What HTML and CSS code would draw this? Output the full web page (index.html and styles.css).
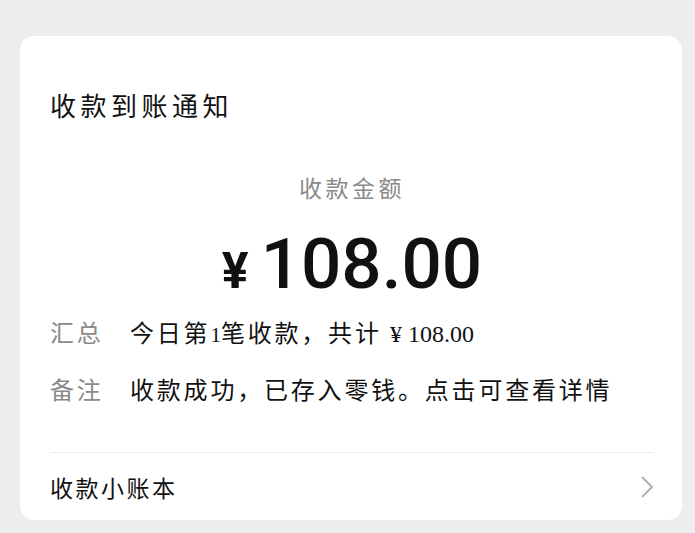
FILE: index.html
```html
<!DOCTYPE html>
<html lang="zh">
<head>
<meta charset="utf-8">
<link rel="stylesheet" href="styles.css">
</head>
<body>
<div class="card">
  <div class="title">收款到账通知</div>
  <div class="label-amount">收款金额</div>
  <div class="amount"><span class="yen">¥</span><span class="num">108.00</span></div>
  <div class="row">
    <div class="key">汇总</div>
    <div class="val">今日第<span class="serif one">1</span>笔收款，共计 <span class="serif">¥ 108.00</span></div>
  </div>
  <div class="row row2">
    <div class="key">备注</div>
    <div class="val">收款成功，已存入零钱。点击可查看详情</div>
  </div>
  <div class="divider"></div>
  <div class="footer">
    <div class="foot-text">收款小账本</div>
    <svg class="chev" width="14" height="24" viewBox="0 0 14 24"><path d="M2 2 L12 12 L2 22" fill="none" stroke="#b3b3b3" stroke-width="2"/></svg>
  </div>
</div>
</body>
</html>
```
FILE: styles.css
```css
html, body { margin: 0; padding: 0; }
body {
  background: #ededed;
  width: 695px;
  height: 533px;
  overflow: hidden;
  font-family: "Noto Sans CJK SC", "Noto Sans", sans-serif;
  color: #111;
}
.card {
  margin: 36px 13px 0 20px;
  height: 484px;
  background: #fff;
  border-radius: 14px;
  padding: 0 28px 0 30px;
  box-sizing: border-box;
  display: flex;
  flex-direction: column;
}
.title {
  margin-top: 52px;
  font-size: 26px;
  line-height: 34px;
  letter-spacing: 4.5px;
}
.label-amount {
  margin-top: 50px;
  text-align: center;
  font-size: 23px;
  line-height: 30px;
  letter-spacing: 3.5px;
  color: #8a8a8a;
}
.amount {
  margin-top: 26px;
  display: flex;
  justify-content: center;
  align-items: baseline;
  font-family: Roboto, "Noto Sans", sans-serif;
  font-weight: 500;
  line-height: 72px;
}
.yen { font-size: 50px; font-weight: 700; margin-right: 12px; }
.num { font-size: 71px; }
.row {
  margin-top: 9px;
  display: flex;
  font-size: 24px;
  line-height: 32px;
  letter-spacing: 2.8px;
}
.row2 { margin-top: 22px; }
.key { width: 80px; color: #8a8a8a; }
.val { color: #111; }
.serif { font-family: "Liberation Serif", serif; font-size: 24px; letter-spacing: 0; }
.one { font-size: 21px; }
.divider {
  margin-top: 47px;
  height: 1px;
  background: #ececec;
}
.footer {
  flex: 1;
  display: flex;
  align-items: center;
  justify-content: space-between;
  padding-bottom: 0;
}
.foot-text { font-size: 23px; letter-spacing: 2.5px; line-height: 32px; }
.chev { display: block; }
```
